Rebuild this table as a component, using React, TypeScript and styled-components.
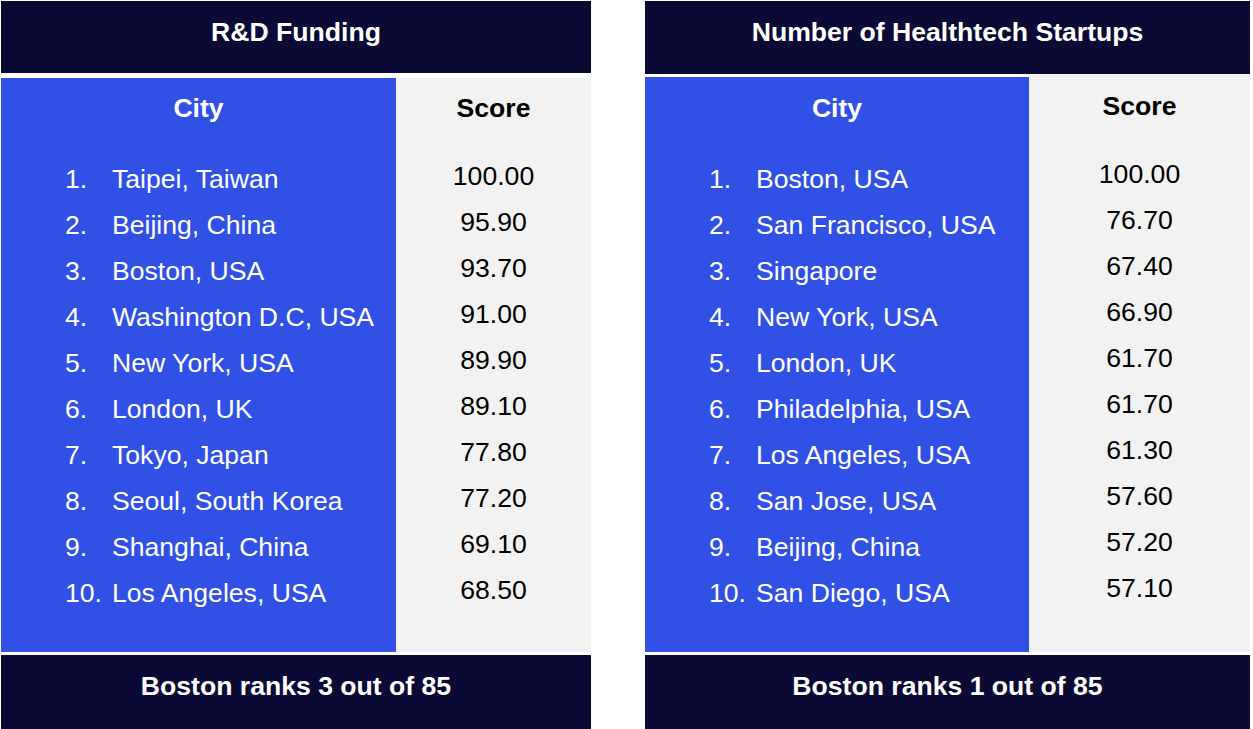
import React from "react";
import styled, { createGlobalStyle } from "styled-components";

const GlobalStyle = createGlobalStyle`
  html, body { margin: 0; padding: 0; background: #ffffff; }
  body { font-family: "Liberation Sans", Arial, sans-serif; }
  * { box-sizing: border-box; }
`;

const NAVY = "#0b0a35";
const BLUE = "#3050e6";
const GRAY = "#f2f2f2";

const Page = styled.div`
  display: flex;
  align-items: flex-start;
  gap: 54px;
  padding: 1px 0 0 1px;
`;

const Card = styled.section<{ $width: number }>`
  width: ${(p) => p.$width}px;
  display: flex;
  flex-direction: column;
`;

const Bar = styled.div<{ $height: number }>`
  height: ${(p) => p.$height}px;
  background: ${NAVY};
  color: #ffffff;
  font-weight: 700;
  font-size: 26.6px;
  text-align: center;
  line-height: 62px;
`;

const Body = styled.div<{ $top: number; $cityWidth: number; $height: number }>`
  margin-top: ${(p) => p.$top}px;
  margin-bottom: 3px;
  height: ${(p) => p.$height}px;
  display: grid;
  grid-template-columns: ${(p) => p.$cityWidth}px 1fr;
`;

const CityCol = styled.div<{ $offset: number }>`
  background: ${BLUE};
  color: #ffffff;
  margin-top: ${(p) => p.$offset}px;
`;

const ScoreCol = styled.div`
  background: ${GRAY};
  color: #000000;
`;

const ColHead = styled.div<{ $lh: number }>`
  font-weight: 700;
  font-size: 26.6px;
  line-height: ${(p) => p.$lh}px;
  text-align: center;
`;

const List = styled.ol<{ $gap: number }>`
  list-style: none;
  margin: ${(p) => p.$gap}px 0 0 0;
  padding: 0 0 0 64px;
`;

const CityRow = styled.li`
  display: flex;
  font-size: 26.6px;
  line-height: 46px;
  white-space: nowrap;
`;

const Num = styled.span`
  width: 47px;
  flex: none;
`;

const Scores = styled.div<{ $gap: number }>`
  margin-top: ${(p) => p.$gap}px;
  display: flex;
  flex-direction: column;
  align-items: center;
`;

const ScoreRow = styled.div`
  font-size: 26.6px;
  line-height: 46px;
`;

type Entry = [string, string];

type TableProps = {
  title: string;
  footer: string;
  width: number;
  cityWidth: number;
  bodyTop: number;
  bodyHeight: number;
  cityOffset: number;
  cityHead: number;
  cityGap: number;
  scoreHead: number;
  scoreGap: number;
  headHeight: number;
  rows: Entry[];
};

const RankTable: React.FC<TableProps> = (p) => (
  <Card $width={p.width}>
    <Bar $height={p.headHeight}>{p.title}</Bar>
    <Body $top={p.bodyTop} $cityWidth={p.cityWidth} $height={p.bodyHeight}>
      <CityCol $offset={p.cityOffset}>
        <ColHead $lh={p.cityHead}>City</ColHead>
        <List $gap={p.cityGap}>
          {p.rows.map(([city], i) => (
            <CityRow key={city}>
              <Num>{i + 1}.</Num>
              {city}
            </CityRow>
          ))}
        </List>
      </CityCol>
      <ScoreCol>
        <ColHead $lh={p.scoreHead}>Score</ColHead>
        <Scores $gap={p.scoreGap}>
          {p.rows.map(([city, s]) => (
            <ScoreRow key={city}>{s}</ScoreRow>
          ))}
        </Scores>
      </ScoreCol>
    </Body>
    <Bar $height={80}>{p.footer}</Bar>
  </Card>
);

const rd: Entry[] = [
  ["Taipei, Taiwan", "100.00"],
  ["Beijing, China", "95.90"],
  ["Boston, USA", "93.70"],
  ["Washington D.C, USA", "91.00"],
  ["New York, USA", "89.90"],
  ["London, UK", "89.10"],
  ["Tokyo, Japan", "77.80"],
  ["Seoul, South Korea", "77.20"],
  ["Shanghai, China", "69.10"],
  ["Los Angeles, USA", "68.50"],
];

const ht: Entry[] = [
  ["Boston, USA", "100.00"],
  ["San Francisco, USA", "76.70"],
  ["Singapore", "67.40"],
  ["New York, USA", "66.90"],
  ["London, UK", "61.70"],
  ["Philadelphia, USA", "61.70"],
  ["Los Angeles, USA", "61.30"],
  ["San Jose, USA", "57.60"],
  ["Beijing, China", "57.20"],
  ["San Diego, USA", "57.10"],
];

export default function App() {
  return (
    <>
      <GlobalStyle />
      <Page>
        <RankTable
          title="R&D Funding"
          footer="Boston ranks 3 out of 85"
          width={590}
          cityWidth={395}
          headHeight={72}
          bodyTop={5}
          bodyHeight={574}
          cityOffset={0}
          cityHead={60}
          cityGap={18}
          scoreHead={60}
          scoreGap={15}
          rows={rd}
        />
        <RankTable
          title="Number of Healthtech Startups"
          footer="Boston ranks 1 out of 85"
          width={605}
          cityWidth={384}
          headHeight={73}
          bodyTop={1}
          bodyHeight={577}
          cityOffset={2}
          cityHead={62}
          cityGap={17}
          scoreHead={62}
          scoreGap={14}
          rows={ht}
        />
      </Page>
    </>
  );
}
